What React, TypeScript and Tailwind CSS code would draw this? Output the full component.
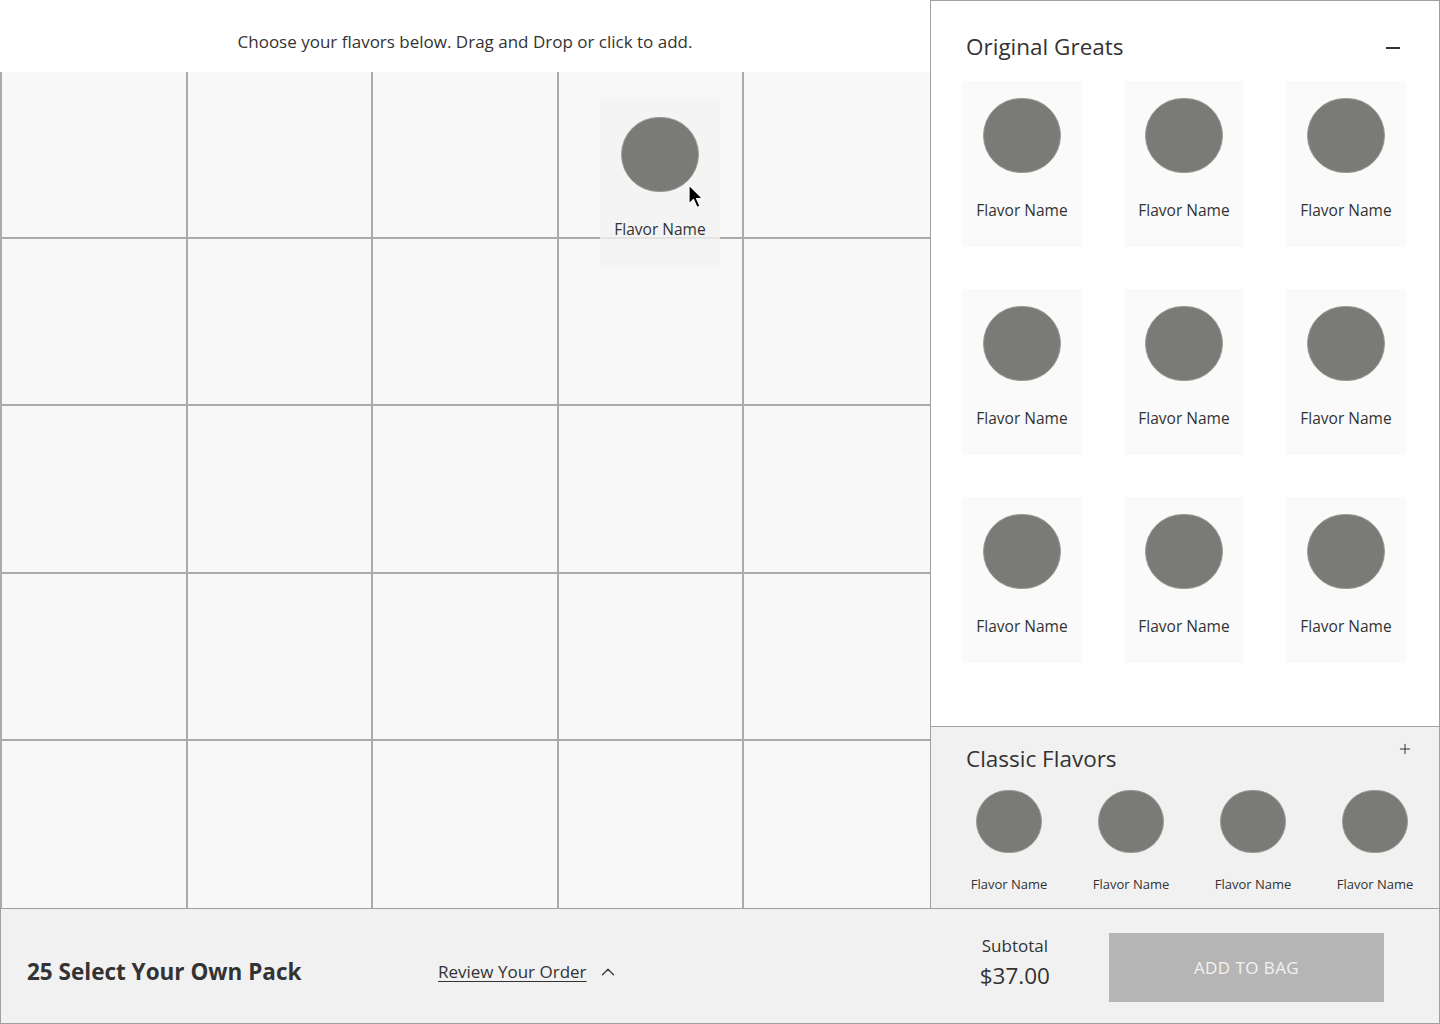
import { Plus, ChevronUp } from "lucide-react";

const font = { fontFamily: "'Open Sans', Lato, sans-serif" };

const FlavorCard = () => (
  <div className="w-[120px] h-[166px] bg-[#fafafa] flex flex-col items-center pt-[17px]">
    <div className="w-[78px] h-[75px] rounded-full bg-[#7a7a76] border border-[#9a9a96]" />
    <div className="mt-[26px] text-[15.5px] text-[#333]">Flavor Name</div>
  </div>
);

const ClassicItem = () => (
  <div className="flex flex-col items-center">
    <div className="w-[66px] h-[63px] rounded-full bg-[#7a7a76] border border-[#9a9a96]" />
    <div className="mt-[22px] text-[13px] text-[#333]">Flavor Name</div>
  </div>
);

const Cursor = () => (
  <svg width="18" height="26" viewBox="0 0 18 26" className="absolute left-[88px] top-[87px]">
    <path d="M1 1 L1 20 L5.5 15.5 L9 23.5 L12 22 L8.5 14.5 L14.5 14.5 Z" fill="#000" stroke="#fff" strokeWidth="1.2" strokeLinejoin="round" />
  </svg>
);

export default function App() {
  const cells = Array.from({ length: 25 });
  const greats = Array.from({ length: 9 });
  const classics = Array.from({ length: 4 });

  return (
    <div className="w-[1440px] h-[1024px] flex flex-col bg-white text-[#333]" style={font}>
      <div className="flex h-[908px]">
        {/* 왼쪽: 팩 그리드 */}
        <div className="w-[930px] flex flex-col relative">
          <div className="h-[72px] flex items-center justify-center text-[17px] text-[#333] pt-[12px]">
            Choose your flavors below. Drag and Drop or click to add.
          </div>
          <div className="flex-1 grid grid-cols-5 grid-rows-5 bg-[#f8f8f8] border-l-2 border-[#ababab]">
            {cells.map((_, i) => (
              <div
                key={i}
                className={`border-[#ababab] ${i % 5 !== 4 ? "border-r-2" : ""} ${i < 20 ? "border-b-2" : ""}`}
              />
            ))}
          </div>

          {/* 드래그 중인 아이템 */}
          <div className="absolute left-[600px] top-[97px] w-[120px] h-[170px] bg-[#f2f2f2]/80 flex flex-col items-center pt-[20px]">
            <div className="w-[78px] h-[75px] rounded-full bg-[#7a7a76] border border-[#9a9a96]" />
            <div className="mt-[26px] text-[15.5px] text-[#333]">Flavor Name</div>
            <Cursor />
          </div>
        </div>

        {/* 오른쪽: 맛 선택 패널 */}
        <div className="w-[510px] flex flex-col border-l border-t border-r border-[#a0a0a0]">
          <div className="h-[725px] bg-white pl-[31px] pr-[33px]">
            <div className="flex items-center justify-between h-[80px] pl-[4px] pt-[12px]">
              <span className="text-[22.5px] text-[#333]">Original Greats</span>
              <div className="w-[14px] h-[1.5px] bg-[#333] mr-[6px] mt-[2px]" />
            </div>
            <div className="grid grid-cols-3 gap-x-[42px] gap-y-[42px]">
              {greats.map((_, i) => (
                <FlavorCard key={i} />
              ))}
            </div>
          </div>

          <div className="flex-1 bg-[#f1f1f1] border-t border-[#a0a0a0]">
            <div className="flex justify-between pl-[35px] pr-[26px] pt-[15px]">
              <span className="text-[22.5px] text-[#333]">Classic Flavors</span>
              <Plus size={16} strokeWidth={1.5} className="text-[#333] mt-[-1px]" />
            </div>
            <div className="grid grid-cols-4 pl-[17px] pr-[3px] mt-[14px]">
              {classics.map((_, i) => (
                <ClassicItem key={i} />
              ))}
            </div>
          </div>
        </div>
      </div>

      {/* 하단 바 */}
      <div className="flex-1 bg-[#f1f1f1] border border-[#a0a0a0] flex items-center pl-[26px] pr-[55px] pt-[12px]">
        <div className="text-[22.5px] font-bold text-[#333] w-[411px]">25 Select Your Own Pack</div>
        <div className="flex items-center gap-[10px] text-[17px] text-[#333]">
          <span className="underline underline-offset-[3px]">Review Your Order</span>
          <ChevronUp size={22} strokeWidth={1.3} />
        </div>
        <div className="ml-auto flex flex-col items-center mr-[59px] mt-[-18px]">
          <span className="text-[17px] text-[#333]">Subtotal</span>
          <span className="text-[22.5px] text-[#333] mt-[0px]">$37.00</span>
        </div>
        <button className="w-[275px] h-[69px] bg-[#b5b5b5] text-[#f2f2f2] text-[17px] tracking-wide mt-[-10px] pt-[2px]">
          ADD TO BAG
        </button>
      </div>
    </div>
  );
}
